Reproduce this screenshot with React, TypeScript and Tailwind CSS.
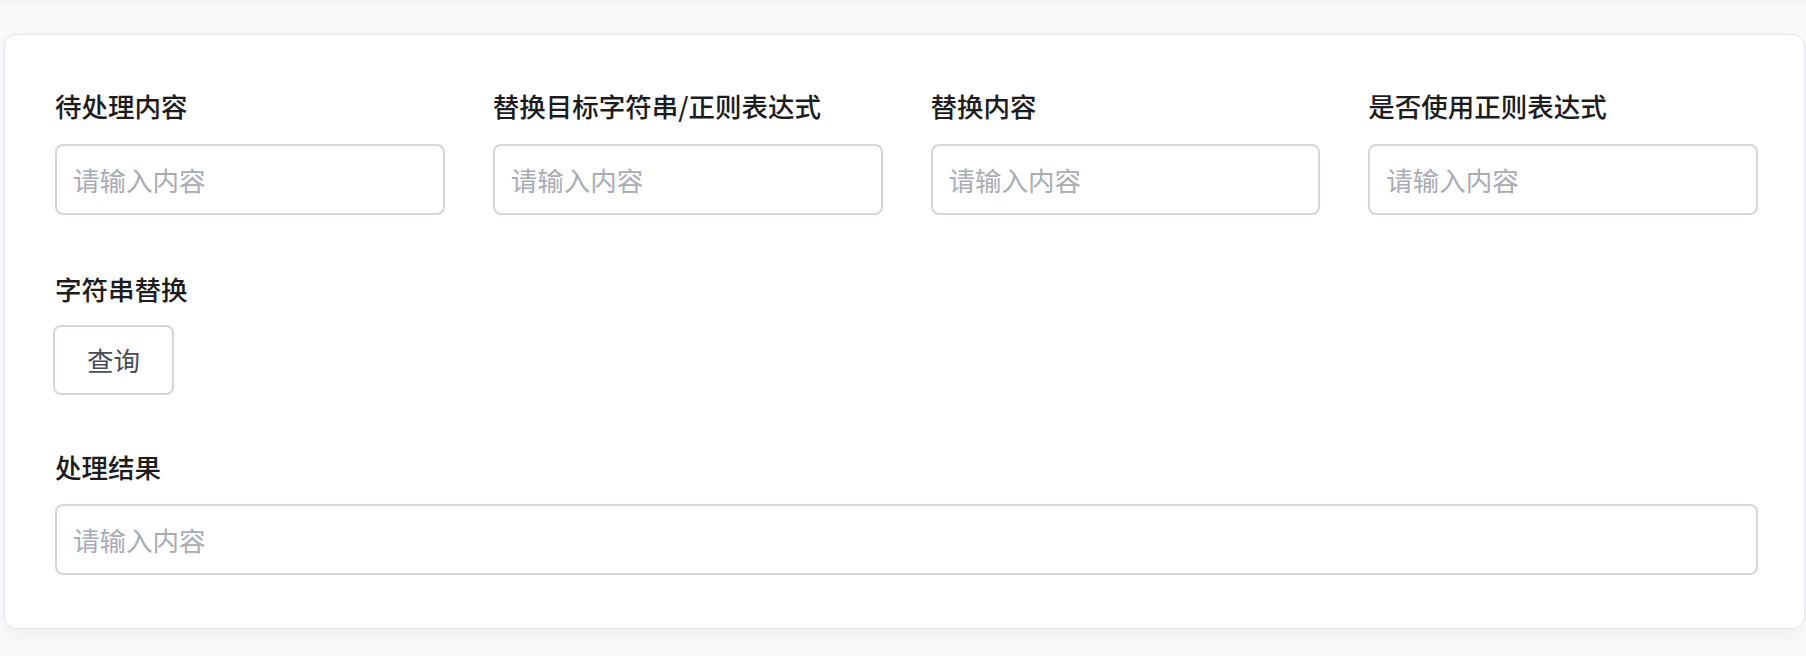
import React from "react";

const font = { fontFamily: '"Noto Sans CJK SC", "Noto Sans", sans-serif' };

function Field({ label }: { label: string }) {
  return (
    <div className="flex flex-col">
      <label className="text-[26.5px] leading-[32px] font-medium text-[#1c1c1e] mb-[22px]">{label}</label>
      <input
        placeholder="请输入内容"
        className="h-[71px] w-full rounded-[8px] border-2 border-[#d3d6df] bg-white pl-[16px] text-[26.5px] text-[#303133] placeholder:text-[#a9acb4] outline-none"
      />
    </div>
  );
}

export default function App() {
  return (
    <div
      className="min-h-[656px] bg-[#f8f9fb] pt-[34px] shadow-[inset_0_10px_10px_-10px_rgba(0,0,0,0.06)]"
      style={font}
    >
      <div className="ml-[4px] mr-[1px] rounded-[12px] border border-[#e3e5ea] bg-white pl-[50px] pr-[46px] pt-[55px] pb-[53px] shadow-[0_6px_16px_rgba(0,0,0,0.04)]">
        {/* 输入参数 */}
        <div className="grid grid-cols-4 gap-x-[48px]">
          <Field label="待处理内容" />
          <Field label="替换目标字符串/正则表达式" />
          <Field label="替换内容" />
          <Field label="是否使用正则表达式" />
        </div>

        <div className="mt-[58px] flex flex-col items-start">
          <span className="text-[26.5px] leading-[32px] font-medium text-[#1c1c1e] mb-[20px]">字符串替换</span>
          <button className="-ml-[2px] h-[70px] w-[121px] rounded-[8px] border-2 border-[#d3d6df] bg-white text-[26.5px] text-[#4a4d57]">
            查询
          </button>
        </div>

        <div className="mt-[56px] flex flex-col">
          <span className="text-[26.5px] leading-[32px] font-medium text-[#1c1c1e] mb-[21px]">处理结果</span>
          <input
            placeholder="请输入内容"
            className="h-[71px] w-full rounded-[8px] border-2 border-[#d3d6df] bg-white pl-[16px] text-[26.5px] text-[#303133] placeholder:text-[#a9acb4] outline-none"
          />
        </div>
      </div>
    </div>
  );
}
